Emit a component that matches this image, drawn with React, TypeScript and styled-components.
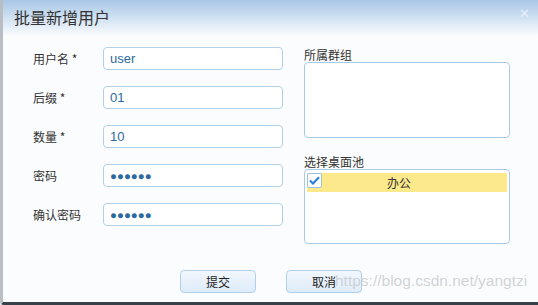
import { Fragment } from 'react'
import styled, { createGlobalStyle } from 'styled-components'

const GlobalStyle = createGlobalStyle`
    html, body {
        margin: 0;
        padding: 0;
        background: #e9edf1;
    }
    body {
        font-family: "Noto Sans CJK SC", "Liberation Sans", sans-serif;
    }
`

const Dialog = styled.div`
    position: relative;
    display: flex;
    flex-direction: column;
    width: 535px;
    height: 302px;
    background: #fbfcfd;
    border-left: 3px solid #b9bec4;
    border-bottom: 3px solid #3a4048;
    border-bottom-left-radius: 4px;
    overflow: hidden;
`
const Header = styled.div`
    display: flex;
    align-items: center;
    justify-content: space-between;
    height: 36px;
    padding: 0 8px 0 11px;
    background: linear-gradient(to bottom, #a8c7e6 0%, #d4e4f3 55%, #fbfcfd 100%);
    h1 {
        margin: 0;
        font-size: 16px;
        font-weight: normal;
        color: #333;
        line-height: 22px;
        margin-top: -2px;
    }
`
const Close = styled.span`
    font-family: "DejaVu Sans", sans-serif;
    font-size: 13px;
    font-weight: bold;
    color: #e6eef6;
    margin-top: -10px;
`
const Body = styled.div`
    display: grid;
    grid-template-columns: 250px 206px;
    column-gap: 21px;
    padding: 11px 0 0 30px;
`
const Form = styled.div`
    display: grid;
    grid-template-columns: 70px 180px;
    grid-auto-rows: 23px;
    row-gap: 16px;
    align-items: center;
`
const Label = styled.label`
    font-size: 12px;
    color: #333;
`
const Input = styled.div`
    box-sizing: border-box;
    height: 23px;
    padding: 0 6px;
    display: flex;
    align-items: center;
    background: #fff;
    border: 1px solid #b4d0e9;
    border-radius: 4px;
    font-family: "Liberation Sans", Arial, sans-serif;
    font-size: 13px;
    color: #2c6a9e;
`
const Dots = styled.span`
    font-size: 11.5px;
    color: #2c6a9e;
`
const Side = styled.div`
    display: flex;
    flex-direction: column;
`
const SideLabel = styled.div<{ $top?: number }>`
    height: 15px;
    line-height: 15px;
    margin-top: ${p => p.$top ?? 0}px;
    font-size: 12px;
    color: #333;
`
const Box = styled.div<{ $h: number }>`
    box-sizing: border-box;
    height: ${p => p.$h}px;
    background: #fff;
    border: 1px solid #a9cae6;
    border-radius: 4px;
    padding: 2px;
`
const Option = styled.div`
    display: flex;
    align-items: center;
    height: 19px;
    margin-top: 1px;
    background: #fbe98b;
    font-size: 12px;
    color: #333;
`
const Check = styled.span`
    box-sizing: border-box;
    display: flex;
    align-items: center;
    justify-content: center;
    width: 15px;
    height: 15px;
    margin-top: -4px;
    background: #fff;
    border: 1px solid #9fc0df;
    border-radius: 2px;
`
const OptionText = styled.span`
    padding-left: 65px;
`
const Footer = styled.div`
    display: flex;
    gap: 30px;
    padding: 26px 0 0 177px;
`
const Button = styled.button`
    box-sizing: border-box;
    width: 76px;
    height: 23px;
    padding: 0;
    font-family: "Noto Sans CJK SC", sans-serif;
    font-size: 12px;
    color: #222;
    background: linear-gradient(to bottom, #f1f7fd 0%, #deebf8 100%);
    border: 1px solid #b3d0ea;
    border-radius: 4px;
`
const Watermark = styled.div`
    position: absolute;
    left: 332px;
    top: 272px;
    font-family: "Liberation Sans", Arial, sans-serif;
    font-size: 15.5px;
    color: rgba(200, 204, 208, 0.85);
    pointer-events: none;
`

const fields = [
    { label: '用户名 *', value: 'user' },
    { label: '后缀 *', value: '01' },
    { label: '数量 *', value: '10' },
    { label: '密码', value: '', secret: true },
    { label: '确认密码', value: '', secret: true },
]

const App = () => {
    return (
        <>
            <GlobalStyle />
            <Dialog>
                <Header>
                    <h1>批量新增用户</h1>
                    <Close>✕</Close>
                </Header>
                <Body>
                    <Form>
                        {fields.map(f => (
                            <Fragment key={f.label}>
                                <Label>{f.label}</Label>
                                <Input>
                                    {f.secret ? <Dots>●●●●●●</Dots> : f.value}
                                </Input>
                            </Fragment>
                        ))}
                    </Form>
                    <Side>
                        <SideLabel>所属群组</SideLabel>
                        <Box $h={76} />
                        <SideLabel $top={16}>选择桌面池</SideLabel>
                        <Box $h={75}>
                            <Option>
                                <Check>
                                    <svg width="11" height="9" viewBox="0 0 11 9">
                                        <path d="M1 4.5 L4 7.5 L10 1.2" fill="none" stroke="#2f7fd8" strokeWidth="2.2" />
                                    </svg>
                                </Check>
                                <OptionText>办公</OptionText>
                            </Option>
                        </Box>
                    </Side>
                </Body>
                <Footer>
                    <Button>提交</Button>
                    <Button>取消</Button>
                </Footer>
                <Watermark>https://blog.csdn.net/yangtzi</Watermark>
            </Dialog>
        </>
    )
}

export default App
